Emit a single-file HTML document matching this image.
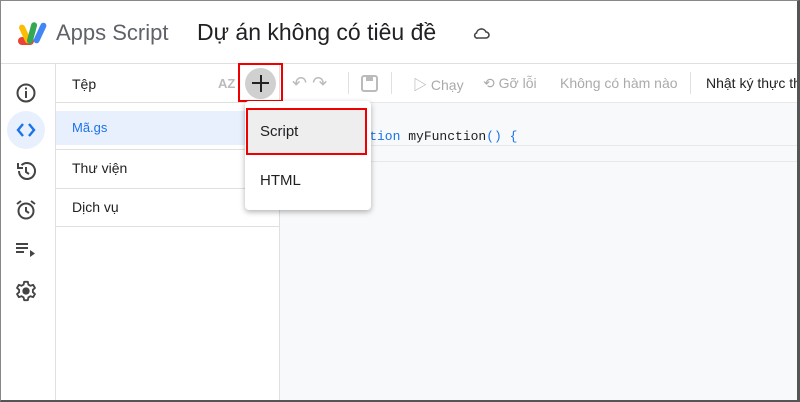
<!DOCTYPE html>
<html><head><meta charset="utf-8"><style>
*{margin:0;padding:0;box-sizing:border-box}
body{width:800px;height:402px;overflow:hidden;background:#fff;font-family:"Liberation Sans","Noto Sans CJK SC",sans-serif;position:relative}
.a{position:absolute}
.frame{left:0;top:0;width:800px;height:402px;border:1px solid #888;border-bottom:2px solid #555;border-right:3px solid #555;z-index:50;pointer-events:none}
</style></head><body>
<div class="a frame"></div>
<svg class="a" style="left:16px;top:20px" width="34" height="28" viewBox="0 0 34 28">
<rect x="2" y="17" width="16" height="8" rx="4" fill="#ea4335"/>
<rect x="6" y="4" width="6" height="20" rx="3" fill="#fbbc04" transform="rotate(-25 9 14)"/>
<rect x="13" y="2" width="6" height="22" rx="3" fill="#34a853" transform="rotate(15 16 13)"/>
<rect x="21" y="2" width="6" height="22" rx="3" fill="#4285f4" transform="rotate(25 24 13)"/>
</svg>
<div class="a" style="left:56px;top:20px;font-size:22px;color:#5f6368">Apps Script</div>
<div class="a" style="left:197px;top:19px;font-size:23px;color:#202124">Dự án không có tiêu đề</div>
<svg class="a" style="left:473px;top:26px" width="18" height="14" viewBox="0 0 18 14"><path d="M5 12h8a3 3 0 0 0 0-6 5 5 0 0 0-9.5 1A2.5 2.5 0 0 0 5 12z" fill="none" stroke="#444" stroke-width="1.6"/></svg>
<div class="a" style="left:0;top:63px;width:800px;height:1px;background:#e0e0e0"></div>
<div class="a" style="left:55px;top:64px;width:1px;height:338px;background:#e0e0e0"></div>
<div class="a" style="left:7px;top:111px;width:38px;height:38px;border-radius:50%;background:#e8f0fe"></div>
<svg class="a" style="left:15px;top:82px" width="22" height="22"><circle cx="11" cy="11" r="8.5" fill="none" stroke="#444" stroke-width="2"/><rect x="10" y="9" width="2" height="7" fill="#444"/><rect x="10" y="5.5" width="2" height="2" fill="#444"/></svg>
<svg class="a" style="left:15px;top:120px" width="22" height="20"><path d="M8 4l-5 6 5 6M14 4l5 6-5 6" fill="none" stroke="#1a73e8" stroke-width="2.4"/></svg>
<svg class="a" style="left:15px;top:160px" width="22" height="22"><path d="M4 11a8 8 0 1 0 2.5-5.8" fill="none" stroke="#444" stroke-width="2"/><path d="M3 3v5h5" fill="none" stroke="#444" stroke-width="2"/><path d="M11 7v5l3 2" fill="none" stroke="#444" stroke-width="2"/></svg>
<svg class="a" style="left:15px;top:199px" width="22" height="22"><circle cx="11" cy="12" r="7.5" fill="none" stroke="#444" stroke-width="2"/><path d="M11 8v4l3 2M2 5l4-3M20 5l-4-3" fill="none" stroke="#444" stroke-width="2"/></svg>
<svg class="a" style="left:15px;top:240px" width="22" height="20"><path d="M1 4h12M1 8h12M1 12h8" stroke="#444" stroke-width="2"/><path d="M15 10l5 3.5-5 3.5z" fill="#444"/></svg>
<svg class="a" style="left:15px;top:280px" width="22" height="22" viewBox="0 0 24 24"><path d="M12 8a4 4 0 1 0 0 8 4 4 0 0 0 0-8z" fill="#444"/><path d="M10 2h4l.6 3 2.3 1.3 2.9-1 2 3.4-2.3 2v2.6l2.3 2-2 3.4-2.9-1-2.3 1.3-.6 3h-4l-.6-3-2.3-1.3-2.9 1-2-3.4 2.3-2V10.7L2.2 8.7l2-3.4 2.9 1L9.4 5z" fill="none" stroke="#444" stroke-width="2" stroke-linejoin="round"/></svg>
<div class="a" style="left:279px;top:64px;width:1px;height:338px;background:#e0e0e0"></div>
<div class="a" style="left:72px;top:76px;font-size:14px;color:#202124">Tệp</div>
<div class="a" style="left:218px;top:76px;font-size:13px;color:#bbb;font-weight:bold">AZ</div>
<div class="a" style="left:56px;top:102px;width:223px;height:1px;background:#e0e0e0"></div>
<div class="a" style="left:56px;top:111px;width:223px;height:34px;background:#e8f0fe"></div>
<div class="a" style="left:72px;top:120px;font-size:13px;color:#1a73e8">Mã.gs</div>
<div class="a" style="left:56px;top:149px;width:223px;height:1px;background:#e0e0e0"></div>
<div class="a" style="left:72px;top:160px;font-size:14px;color:#202124">Thư viện</div>
<div class="a" style="left:56px;top:188px;width:223px;height:1px;background:#e0e0e0"></div>
<div class="a" style="left:72px;top:199px;font-size:14px;color:#202124">Dịch vụ</div>
<div class="a" style="left:56px;top:226px;width:223px;height:1px;background:#e0e0e0"></div>
<div class="a" style="left:245px;top:68px;width:31px;height:31px;border-radius:50%;background:#d0d0d0"></div>
<div class="a" style="left:252px;top:82px;width:17px;height:2px;background:#222"></div>
<div class="a" style="left:259.5px;top:75px;width:2px;height:17px;background:#222"></div>
<div class="a" style="left:238px;top:63px;width:45px;height:39px;border:2px solid #e00"></div>
<div class="a" style="left:292px;top:73px;font-size:18px;color:#bbb">↶ ↷</div>
<div class="a" style="left:348px;top:72px;width:1px;height:22px;background:#e0e0e0"></div>
<svg class="a" style="left:360px;top:74px" width="20" height="20"><rect x="2" y="2" width="15" height="15" rx="2" fill="none" stroke="#bbb" stroke-width="2"/><rect x="6" y="2" width="7" height="5" fill="#bbb"/></svg>
<div class="a" style="left:391px;top:72px;width:1px;height:22px;background:#e0e0e0"></div>
<div class="a" style="left:413px;top:75px;font-size:14px;color:#aaa">▷ Chạy</div>
<div class="a" style="left:483px;top:75px;font-size:14px;color:#aaa">⟲ Gỡ lỗi</div>
<div class="a" style="left:560px;top:75px;font-size:14px;color:#aaa">Không có hàm nào</div>
<div class="a" style="left:690px;top:72px;width:1px;height:22px;background:#e0e0e0"></div>
<div class="a" style="left:706px;top:75px;font-size:14px;color:#202124;white-space:nowrap">Nhật ký thực thi</div>
<div class="a" style="left:280px;top:102px;width:520px;height:1px;background:#e8e8e8"></div>
<div class="a" style="left:280px;top:103px;width:520px;height:299px;background:#f8f9fa"></div>
<div class="a" style="left:280px;top:145px;width:520px;height:1px;background:#e8e8e8"></div>
<div class="a" style="left:280px;top:161px;width:520px;height:1px;background:#e8e8e8"></div>
<div class="a" style="left:338px;top:129px;font-family:'Liberation Mono',monospace;font-size:13px;color:#202124;white-space:pre"><span style="color:#1a73e8">function</span> myFunction<span style="color:#1a73e8">()</span> <span style="color:#1a73e8">{</span></div>
<div class="a" style="left:245px;top:101px;width:126px;height:109px;background:#fff;border-radius:4px;box-shadow:0 2px 6px rgba(0,0,0,.3)"></div>
<div class="a" style="left:246px;top:108px;width:121px;height:47px;background:#eee;border:2px solid #e00"></div>
<div class="a" style="left:260px;top:123px;font-size:15px;color:#202124">Script</div>
<div class="a" style="left:260px;top:172px;font-size:15px;color:#202124">HTML</div>
</body></html>
